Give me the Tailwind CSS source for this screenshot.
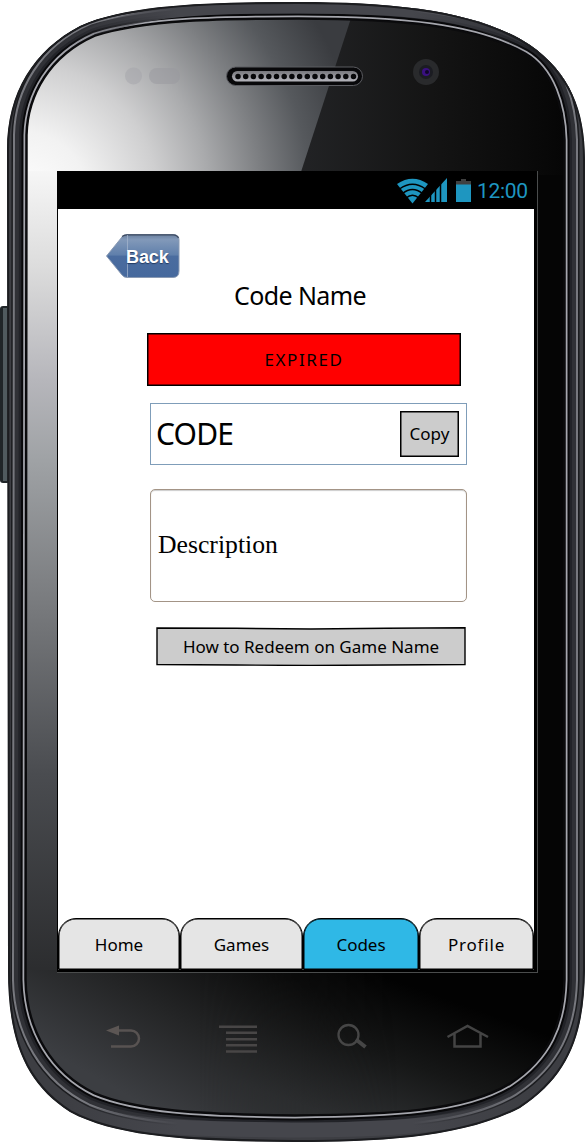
<!DOCTYPE html>
<html lang="en">
<head>
<meta charset="utf-8">
<title>Code Name</title>
<script src="https://cdn.jsdelivr.net/npm/@tailwindcss/browser@4"></script>
</head>
<body class="bg-white">
<main class="relative w-[585px] h-[1143px] overflow-hidden pl-[57px] pt-[171px] font-['Comic_Sans_MS','Noto_Sans',sans-serif] text-black">
  <!-- Phone body -->
  <svg class="absolute left-0 top-0" width="585" height="1143" viewBox="0 0 585 1143" fill="none">
    <defs>
      <path id="outer" d="M7 150C7 92 34 50 80 26C130 3 220 2 298 2C400 2 480 12 530 45C570 73 585 110 585 160V970C584 1030 572 1074 520 1108C462 1138 380 1142 295 1142C200 1141 120 1139 70 1112C25 1083 8 1040 8 970Z"/>
      <path id="inner" d="M27 135C28 95 50 56 95 36C145 20 220 19 298 19C400 19 475 26 525 54C552 70 563 105 564 140V980C563 1025 548 1058 510 1083C465 1111 390 1114 295 1115C200 1114 135 1110 95 1093C52 1072 27 1030 26 980Z"/>
      <clipPath id="co"><use href="#outer"/></clipPath>
      <clipPath id="ci"><use href="#inner"/></clipPath>
      <radialGradient id="shine" gradientUnits="userSpaceOnUse" cx="20" cy="200" r="345">
        <stop offset="0" stop-color="#fff"/><stop offset=".2" stop-color="#f2f2f2"/><stop offset=".4" stop-color="#cfcfd0"/><stop offset=".55" stop-color="#a9aaac"/><stop offset=".7" stop-color="#7d7f82"/><stop offset=".84" stop-color="#56595d"/><stop offset="1" stop-color="#3a3c40"/>
      </radialGradient>
      <linearGradient id="side" gradientUnits="userSpaceOnUse" x1="0" y1="171" x2="0" y2="975">
        <stop offset="0" stop-color="#f6f6f6"/><stop offset=".12" stop-color="#dcdcdc"/><stop offset=".26" stop-color="#b6b6bb"/><stop offset=".36" stop-color="#9fa2a5"/><stop offset=".55" stop-color="#76787b"/><stop offset=".75" stop-color="#4a4c50"/><stop offset="1" stop-color="#2b2c2e"/>
      </linearGradient>
      <linearGradient id="dark" gradientUnits="userSpaceOnUse" x1="300" y1="0" x2="564" y2="0">
        <stop offset="0" stop-color="#222325"/><stop offset=".5" stop-color="#141414"/><stop offset="1" stop-color="#060606"/>
      </linearGradient>
      <linearGradient id="bot" gradientUnits="userSpaceOnUse" x1="180" y1="1125" x2="270" y2="965">
        <stop offset="0" stop-color="#3c3e42"/><stop offset=".5" stop-color="#242526"/><stop offset="1" stop-color="#0b0b0b"/>
      </linearGradient>
      <linearGradient id="botr" gradientUnits="userSpaceOnUse" x1="330" y1="1115" x2="380" y2="975">
        <stop offset="0" stop-color="#2f3133"/><stop offset=".5" stop-color="#161717"/><stop offset="1" stop-color="#020202"/>
      </linearGradient>
      <linearGradient id="fade" x1="0" x2="1"><stop offset="0" stop-color="#000"/><stop offset="1" stop-color="#fff"/></linearGradient>
      <mask id="mr"><rect x="200" y="960" width="200" height="183" fill="url(#fade)"/><rect x="399" y="960" width="190" height="183" fill="#fff"/></mask>
      <linearGradient id="grille" x1="0" y1="0" x2="0" y2="1"><stop offset="0" stop-color="#77777c"/><stop offset="1" stop-color="#b5b5bc"/></linearGradient>
      <linearGradient id="rim" gradientUnits="userSpaceOnUse" x1="60" y1="0" x2="530" y2="0"><stop offset="0" stop-color="#45464c" stop-opacity="0"/><stop offset=".25" stop-color="#45464c"/><stop offset=".75" stop-color="#45464c"/><stop offset="1" stop-color="#45464c" stop-opacity="0"/></linearGradient>
    </defs>
    <rect x="0" y="306" width="10" height="177" rx="3" fill="#202528"/>
    <rect x="3" y="308" width="4" height="173" fill="#505a5e"/>
    <g clip-path="url(#co)">
      <use href="#outer" fill="#3d3e43"/>
      <use href="#inner" stroke="#1b1c1f" stroke-width="31"/>
      <use href="#inner" stroke="#77787e" stroke-width="28"/>
      <use href="#inner" stroke="#303136" stroke-width="24"/>
      <use href="#inner" stroke="#222328" stroke-width="16"/>
      <use href="#inner" stroke="#08080a" stroke-width="11"/>
      <use href="#inner" stroke="#a5a6ad" stroke-width="7"/>
      <use href="#inner" stroke="#08080a" stroke-width="3.5"/>
      <path d="M60 50C120 8 200 8 298 8C420 8 490 15 535 55" stroke="url(#rim)" stroke-width="11"/>
      <path d="M60 1100C110 1131 210 1129 295 1130C400 1130 490 1125 535 1090" stroke="url(#rim)" stroke-width="15"/>
      <use href="#outer" stroke="#1c1d20" stroke-width="4"/>
    </g>
    <g clip-path="url(#ci)">
      <rect x="20" y="10" width="550" height="1110" fill="#050505"/>
      <rect x="20" y="10" width="350" height="165" fill="url(#shine)"/>
      <path d="M352 15H580V175H300Z" fill="url(#dark)"/>
      <rect x="20" y="171" width="40" height="804" fill="url(#side)"/>
      <rect x="20" y="970" width="550" height="150" fill="url(#bot)"/>
      <rect x="200" y="970" width="370" height="150" fill="url(#botr)" mask="url(#mr)"/>
    </g>
    <use href="#inner" stroke="#0b0b0d" stroke-width="1.5"/>
    <!-- Sensors, speaker, camera -->
    <circle cx="133.500" cy="76" r="8.500" fill="#a4a4a9" opacity=".5"/>
    <rect x="149" y="68" width="31" height="16" rx="8" fill="#97979d" opacity=".5"/>
    <rect x="226.500" y="67" width="136" height="18.500" rx="9.200" fill="#08080a" stroke="#5b5c61"/>
    <rect x="232" y="71" width="126" height="10.500" rx="5.200" fill="url(#grille)"/>
    <path d="M238 76.500H354" stroke="#08080a" stroke-width="5.500" stroke-linecap="round" stroke-dasharray="0 7.700"/>
    <circle cx="426" cy="72" r="13" fill="#292a2c"/>
    <circle cx="426" cy="72" r="7" fill="#1b1c22"/>
    <circle cx="426" cy="72" r="4" fill="#3a1080"/>
    <circle cx="427" cy="72" r="2" fill="#10062a"/>
    <!-- Hardware keys -->
    <g stroke="#585352" stroke-width="2.500">
      <path d="M118 1030.500H131A8 8 0 0 1 131 1046.500H111"/>
      <path d="M106 1030.500L119 1025.500V1035.500Z" fill="#5c5654" stroke="none"/>
      <path d="M219 1026.700H257M226 1032.800H257M226 1039.200H257M226 1045.300H257M226 1051.500H257" stroke="#484646"/>
      <circle cx="348.500" cy="1035" r="10" stroke="#464646" stroke-width="2.300"/>
      <path d="M356 1039.500L365.500 1047" stroke="#464646" stroke-width="4"/>
      <path d="M447.500 1037L467.500 1026L488 1037M454.500 1034V1046.500H480.500V1034" stroke="#444"/>
    </g>
  </svg>

  <section class="relative w-[481px] h-[802px] bg-black border-r border-b border-[#4a4c4c] flex flex-col">
    <header class="h-[38px] shrink-0 flex items-center justify-end pr-[9px] text-[#1e96c0]">
      <svg width="80" height="38" viewBox="397 171 80 38" fill="none">
        <path d="M397 184Q412.500 173.500 428 184L412.500 203.500Z" fill="#1e96c0"/>
        <path d="M399.500 189Q412.500 179.500 425.500 189M402.500 193.500Q412.500 185.500 422.500 193.500M406 198Q412.500 192.500 419 198" stroke="#000" stroke-width="1.500"/>
        <path d="M425 202L447 178V202Z" fill="#1e96c0"/>
        <path d="M430.500 203V178M435.500 203V178M440.500 203V178" stroke="#000" stroke-width="1.500"/>
        <path d="M456 181H461V179H466V181H471V185H456Z" fill="#404040"/>
        <path d="M456 184.500H471V202H456Z" fill="#1e96c0"/>
      </svg>
      <span class="w-[51px] pt-[2px] font-[Roboto] text-[21px] leading-none tracking-[-0.3px] whitespace-nowrap">12:00</span>
    </header>

    <div class="ml-px w-[476px] flex-1 bg-white flex flex-col">
      <button class="relative mt-[25px] ml-[48px] w-[74px] h-[44px] shrink-0 text-left">
        <svg class="absolute inset-0" width="74" height="44" viewBox="0 0 74 44">
          <defs><linearGradient id="bk" x1="0" y1="0" x2="0" y2="1"><stop offset="0" stop-color="#6a7f9e"/><stop offset=".12" stop-color="#8299b9"/><stop offset=".48" stop-color="#5f7fab"/><stop offset=".5" stop-color="#4a6c9f"/><stop offset="1" stop-color="#46699d"/></linearGradient></defs>
          <path d="M.5 22L16 3Q18 .5 21 .5H67Q73 .5 73 6V37Q73 43.500 67 43.500H21Q18 43.500 16 41Z" fill="url(#bk)" stroke="#8a9ab3"/>
          <path d="M16 2.500Q18 .8 21 .8H67Q71 .8 72.500 4" fill="none" stroke="#3d4a60" stroke-width="1.300"/>
          <path d="M21.500 1V43" stroke="#a7b7cf" opacity=".7"/>
        </svg>
        <span class="relative block pl-[20px] pt-px font-['Liberation_Sans'] font-bold text-[18px] leading-[44px] tracking-[-0.1px] text-white [text-shadow:0_1px_1px_#223a60]">Back</span>
      </button>
      <h1 class="ml-[176px] mt-px h-[32px] w-[134px] shrink-0 text-[25px] leading-[32px] tracking-[-0.6px] whitespace-nowrap">Code Name</h1>
      <div class="ml-[89px] mt-[22px] h-[53px] w-[314px] shrink-0 bg-[#f00] border border-black shadow-[inset_0_0_0_0.5px_#000] flex items-center justify-center text-[17px] tracking-[1.6px]">EXPIRED</div>
      <div class="ml-[92px] mt-[17px] h-[62px] w-[317px] shrink-0 border border-[#7f9db9] flex items-center justify-between pl-[5px] pr-[7px]">
        <span class="font-['Noto_Sans'] text-[30px] leading-none tracking-[-0.8px]">CODE</span>
        <button class="w-[59px] h-[46px] bg-[#ccc] border border-black shadow-[inset_0_0_0_0.5px_#000] text-[17px]">Copy</button>
      </div>
      <div class="ml-[92px] mt-[24px] h-[113px] w-[317px] shrink-0 rounded-[5px] border border-[#a39486] shadow-[inset_0_1px_1px_#ccc] flex items-center pl-[7px] font-['Liberation_Serif'] text-[25.7px]">Description</div>
      <button class="relative ml-[98px] mt-[25px] w-[310px] h-[39px] shrink-0 text-[17px]">
        <svg class="absolute inset-0" width="310" height="39" viewBox="0 0 310 39"><path d="M1 1L80 1.300L155 2L230 1.300L309 .8V37.500L230 38L155 38.500L80 38L1 37.500Z" fill="#ccc" stroke="#000" stroke-width="1.400"/></svg>
        <span class="relative whitespace-nowrap">How to Redeem on Game Name</span>
      </button>
      <nav class="mt-auto h-[52px] flex text-[17px] text-center leading-[52px]">
        <a class="w-[122px] h-[52px] bg-[#e5e5e5] border border-black shadow-[inset_0_0_0_0.5px_#000] rounded-t-[18px]"><span class="block">Home</span></a>
        <a class="w-[123px] h-[52px] bg-[#e5e5e5] border border-black shadow-[inset_0_0_0_0.5px_#000] rounded-t-[18px]"><span class="block">Games</span></a>
        <a class="w-[116px] h-[52px] bg-[#2fb8e6] border border-black shadow-[inset_0_0_0_0.5px_#000] rounded-t-[18px]"><span class="block">Codes</span></a>
        <a class="w-[115px] h-[52px] bg-[#e5e5e5] border border-black shadow-[inset_0_0_0_0.5px_#000] rounded-t-[18px]"><span class="block tracking-[0.8px]">Profile</span></a>
      </nav>
      <div class="h-[2px] bg-black"></div>
    </div>
  </section>
</main>
</body>
</html>
